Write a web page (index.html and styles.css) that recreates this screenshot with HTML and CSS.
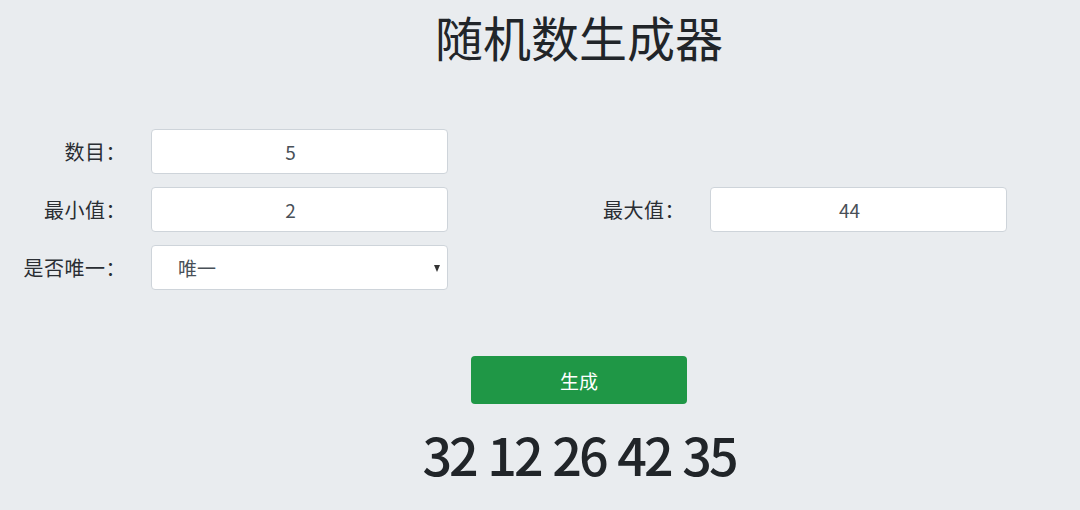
FILE: index.html
```html
<!DOCTYPE html>
<html lang="zh">
<head>
<meta charset="utf-8">
<title>随机数生成器</title>
<link rel="stylesheet" href="styles.css">
</head>
<body>
  <h1 class="title">随机数生成器</h1>
  <form class="form">
    <label class="label" for="count">数目：</label>
    <input class="field" id="count" type="text" value="5">
    <span class="empty"></span>
    <span class="empty"></span>

    <label class="label" for="min">最小值：</label>
    <input class="field" id="min" type="text" value="2">
    <label class="label" for="max">最大值：</label>
    <input class="field" id="max" type="text" value="44">

    <label class="label" for="uniq">是否唯一：</label>
    <div class="select-wrap">
      <select class="field select" id="uniq">
        <option>唯一</option>
        <option>不唯一</option>
      </select>
    </div>
  </form>
  <div class="actions">
    <button class="btn" type="button">生成</button>
  </div>
  <div class="result">32 12 26 42 35</div>
</body>
</html>
```

FILE: styles.css
```css
* { box-sizing: border-box; }
html, body {
  margin: 0;
  padding: 0;
  background: #e9ecef;
}
body {
  font-family: "Noto Sans CJK SC", "Noto Sans", sans-serif;
  color: #212529;
  width: 1080px;
  height: 510px;
  overflow: hidden;
}
.title {
  margin: 0;
  padding: 7px 0 0 78px;
  text-align: center;
  font-size: 48px;
  font-weight: 400;
  line-height: 58px;
  color: #212529;
}
.form {
  margin-top: 64px;
  display: grid;
  grid-template-columns: 151px 297px 262px 297px;
  grid-auto-rows: 45px;
  row-gap: 13px;
  align-items: center;
}
.label {
  text-align: right;
  padding-right: 25px;
  font-size: 20px;
  line-height: 45px;
  letter-spacing: 0.5px;
  color: #2a2e33;
}
.field {
  width: 297px;
  height: 45px;
  margin: 0;
  padding: 0 18px 0 0;
  border: 1px solid #ced4da;
  border-radius: 4px;
  background: #fff;
  font-family: "Noto Sans CJK SC", "Noto Sans", sans-serif;
  font-size: 19px;
  color: #495057;
  text-align: center;
  outline: none;
}
.select-wrap {
  position: relative;
  width: 297px;
  height: 45px;
}
.select-wrap::after {
  content: "";
  position: absolute;
  right: 8px;
  top: 20px;
  border-left: 3.5px solid transparent;
  border-right: 3.5px solid transparent;
  border-top: 7px solid #333;
  pointer-events: none;
}
.select {
  appearance: none;
  -webkit-appearance: none;
  text-align: left;
  padding: 0 0 0 26px;
}
.actions {
  margin-top: 66px;
  padding-left: 78px;
  display: flex;
  justify-content: center;
}
.btn {
  width: 216px;
  height: 48px;
  border: none;
  border-radius: 4px;
  background: #1f9746;
  color: #fff;
  font-family: "Noto Sans CJK SC", "Noto Sans", sans-serif;
  font-size: 19px;
}
.result {
  margin-top: 20px;
  padding-left: 78px;
  text-align: center;
  font-size: 52px;
  font-weight: 500;
  line-height: 60px;
  letter-spacing: -3px;
  word-spacing: 3px;
  color: #212529;
}
```
